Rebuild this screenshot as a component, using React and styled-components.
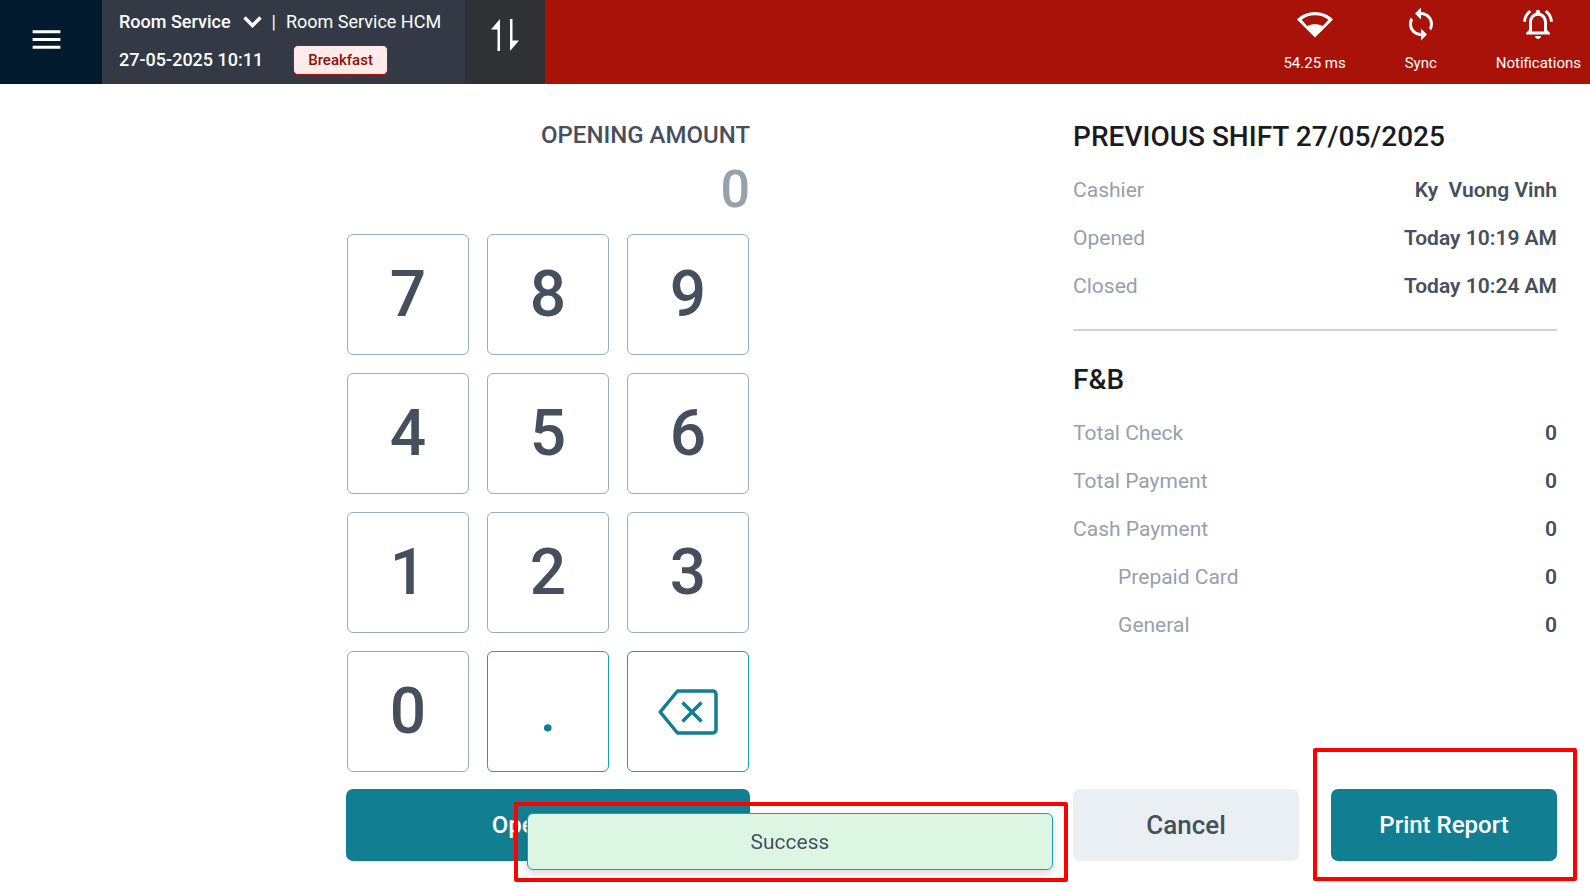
import React, { useState } from "react";
import styled, { createGlobalStyle, css } from "styled-components";
import { MdMenu, MdSync, MdOutlineNotificationsActive } from "react-icons/md";

const colors = {
  red: "#a81208",
  navy: "#021a2e",
  slate: "#333a46",
  charcoal: "#303135",
  teal: "#117e92",
  tealBorder: "#17a0b4",
  keyBorder: "#93adc3",
  text: "#454f5d",
  muted: "#95a1ac",
  heading: "#1b1b1f",
};

const GlobalStyle = createGlobalStyle`
  *, *::before, *::after {
    box-sizing: border-box;
  }

  body {
    margin: 0;
    background: #fff;
    color: ${colors.text};
    font-family: Roboto, "Liberation Sans", sans-serif;
  }

  button {
    padding: 0;
    border: 0;
    background: none;
    color: inherit;
    font: inherit;
    cursor: pointer;
  }

  h2, dl, dd, p {
    margin: 0;
  }
`;

const Page = styled.div`
  display: flex;
  flex-direction: column;
  min-height: 100vh;
`;

const Header = styled.header`
  display: flex;
  height: 84px;
  background: ${colors.red};
  color: #fff;
`;

const MenuButton = styled.button`
  display: flex;
  align-items: center;
  justify-content: center;
  width: 102px;
  padding-right: 10px;
  padding-bottom: 6px;
  background: ${colors.navy};
`;

const Outlet = styled.div`
  display: flex;
  flex-direction: column;
  gap: 8px;
  min-width: 363px;
  padding: 7px 17px;
  background: ${colors.slate};
  font-size: 18px;
  line-height: 28px;
`;

const OutletRow = styled.div`
  display: flex;
  align-items: center;
  gap: ${({ $gap }) => $gap};
  height: 30px;
`;

const OutletButton = styled.button`
  display: flex;
  align-items: center;
  gap: 12px;
  font-weight: 500;
`;

const DateTime = styled.span`
  font-weight: 500;
`;

const MealBadge = styled.span`
  padding: 0 14px;
  border: 1px solid #a81208;
  border-radius: 5px;
  background: #ffebe9;
  color: #8c1009;
  font-size: 15px;
  font-weight: 500;
`;

const SwapButton = styled.button`
  display: flex;
  justify-content: center;
  width: 80px;
  padding-top: 18px;
  background: ${colors.charcoal};
`;

const HeaderActions = styled.div`
  display: flex;
  gap: 57px;
  margin-left: auto;
  padding: 6px 9px 0 0;
`;

const HeaderAction = styled.button`
  display: flex;
  flex-direction: column;
  align-items: center;
  gap: 11px;
  font-size: 15px;
  line-height: 20px;
`;

const Main = styled.main`
  flex: 1;
  display: grid;
  grid-template-columns: 2.17fr 1fr;
  padding: 36px 33px 29px 23px;
`;

const AmountSection = styled.section`
  display: flex;
  flex-direction: column;
  width: 404px;
  justify-self: center;
`;

const AmountLabel = styled.label`
  font-size: 24px;
  font-weight: 500;
  line-height: 30px;
  text-align: right;
`;

const AmountInput = styled.input`
  width: 100%;
  height: 62px;
  margin: 8px 0 14px;
  padding: 0;
  border: 0;
  outline: 0;
  background: none;
  color: ${colors.muted};
  font: 500 52px Roboto, "Liberation Sans", sans-serif;
  text-align: right;
`;

const Keypad = styled.div`
  display: grid;
  grid-template-columns: repeat(3, 1fr);
  gap: 18px;
  padding: 0 1px;
`;

const Key = styled.button`
  display: flex;
  align-items: center;
  justify-content: center;
  height: 121px;
  border: 1px solid ${colors.keyBorder};
  border-radius: 6px;
  font-size: 64px;
  font-weight: 500;

  ${({ $accent }) =>
    $accent &&
    css`
      border-color: ${colors.tealBorder};
      color: ${colors.teal};
      font-size: 56px;
    `}
`;

const ActionButton = styled.button`
  flex: 1;
  min-height: 72px;
  border-radius: 7px;
  background: ${({ $light }) => ($light ? "#eaeff3" : colors.teal)};
  color: ${({ $light }) => ($light ? colors.text : "#fff")};
  font-size: ${({ $light }) => ($light ? "26px" : "24px")};
  font-weight: 500;
`;

const ButtonRow = styled.div`
  display: flex;
  gap: 32px;
  margin-top: auto;
`;

const ShiftPanel = styled.section`
  display: flex;
  flex-direction: column;
`;

const PanelTitle = styled.h2`
  color: ${colors.heading};
  font-size: 28px;
  font-weight: 500;
  line-height: 34px;
`;

const Details = styled.dl`
  padding-top: 12px;
`;

const DetailRow = styled.div`
  display: flex;
  align-items: center;
  justify-content: space-between;
  height: 48px;
  padding-left: ${({ $nested }) => ($nested ? "45px" : "0")};
  font-size: 21px;

  dt {
    color: ${colors.muted};
  }

  dd {
    font-weight: 600;
    white-space: pre;
  }
`;

const Divider = styled.hr`
  width: 100%;
  height: 2px;
  margin: 19px 0 32px;
  border: 0;
  background: #d4d3da;
`;

const Toast = styled.div`
  position: fixed;
  bottom: 20px;
  left: calc(50% - 5px);
  transform: translateX(-50%);
  display: flex;
  align-items: center;
  justify-content: center;
  width: 526px;
  height: 57px;
  border: 1px solid ${colors.tealBorder};
  border-radius: 6px;
  background: #dcf6e3;
  box-shadow: 0 4px 8px rgba(0, 0, 0, 0.15);
  font-size: 21px;

  &::after {
    content: "";
    position: absolute;
    inset: -12px -16px -13px -14px;
    border: 4px solid #f00;
    border-radius: 2px;
  }
`;

const Highlight = styled.div`
  position: relative;
  flex: 1;
  display: flex;

  &::after {
    content: "";
    position: absolute;
    inset: -41px -20px -20px -18px;
    border: 4px solid #f00;
    border-radius: 2px;
    pointer-events: none;
  }
`;

const ChevronIcon = () => (
  <svg width="19" height="12" viewBox="0 0 19 12" aria-hidden="true">
    <path d="M1.500 1.500 9.500 9.500l8-8" fill="none" stroke="currentColor" strokeWidth="3.400" />
  </svg>
);

const SwapIcon = () => (
  <svg width="28" height="34" viewBox="0 0 28 34" fill="currentColor" aria-hidden="true">
    <path d="M9 1v32H6.500V11.500H0z" />
    <path d="M19 33V1h2.500v21.500H28z" />
  </svg>
);

const SignalIcon = () => (
  <svg width="36" height="36" viewBox="0 0 24 24" fill="currentColor" aria-hidden="true">
    <path
      fillRule="evenodd"
      d="M12 4C7.310 4 3.070 5.900 0 8.980L12 21 24 8.980C20.930 5.900 16.690 4 12 4zM3.100 9.100C5.700 7.100 8.700 6.200 12 6.200s6.300.9 8.900 2.900l-3.700 4.300C15.700 12.600 14 12.200 12 12.200s-3.700.4-5.200 1.200z"
    />
  </svg>
);

const BackspaceIcon = () => (
  <svg width="60" height="46" viewBox="0 0 60 46" fill="none" stroke="currentColor" strokeWidth="3.500" aria-hidden="true">
    <path d="M19.500 2H55a3 3 0 0 1 3 3v36a3 3 0 0 1-3 3H19.500L2.200 23z" strokeLinejoin="round" />
    <path d="m24.500 13.500 19 19m0-19-19 19" />
  </svg>
);

const DIGITS = ["7", "8", "9", "4", "5", "6", "1", "2", "3", "0"];

const SHIFT_ROWS = [
  { label: "Cashier", value: "Ky  Vuong Vinh" },
  { label: "Opened", value: "Today 10:19 AM" },
  { label: "Closed", value: "Today 10:24 AM" },
];

const FNB_ROWS = [
  { label: "Total Check", value: "0" },
  { label: "Total Payment", value: "0" },
  { label: "Cash Payment", value: "0" },
  { label: "Prepaid Card", value: "0", nested: true },
  { label: "General", value: "0", nested: true },
];

const DetailList = ({ rows }) => (
  <Details>
    {rows.map(({ label, value, nested }) => (
      <DetailRow key={label} $nested={nested}>
        <dt>{label}</dt>
        <dd>{value}</dd>
      </DetailRow>
    ))}
  </Details>
);

const App = () => {
  const [amount, setAmount] = useState("0");

  const handleKeyClick = (key) => {
    setAmount((prev) => {
      if (key === "." && prev.includes(".")) return prev;
      return prev === "0" && key !== "." ? key : prev + key;
    });
  };

  const handleBackspaceClick = () => {
    setAmount((prev) => prev.slice(0, -1) || "0");
  };

  return (
    <Page>
      <GlobalStyle />
      <Header>
        <MenuButton type="button" aria-label="Menu">
          <MdMenu size={37} />
        </MenuButton>
        <Outlet>
          <OutletRow $gap="10px">
            <OutletButton type="button">
              Room Service
              <ChevronIcon />
            </OutletButton>
            <span>|</span>
            <span>Room Service HCM</span>
          </OutletRow>
          <OutletRow $gap="30px">
            <DateTime>27-05-2025 10:11</DateTime>
            <MealBadge>Breakfast</MealBadge>
          </OutletRow>
        </Outlet>
        <SwapButton type="button" aria-label="Switch">
          <SwapIcon />
        </SwapButton>
        <HeaderActions>
          <HeaderAction type="button">
            <SignalIcon />
            54.25 ms
          </HeaderAction>
          <HeaderAction type="button">
            <MdSync size={36} />
            Sync
          </HeaderAction>
          <HeaderAction type="button">
            <MdOutlineNotificationsActive size={36} />
            Notifications
          </HeaderAction>
        </HeaderActions>
      </Header>

      <Main>
        <AmountSection>
          <AmountLabel htmlFor="opening-amount">OPENING AMOUNT</AmountLabel>
          <AmountInput
            id="opening-amount"
            type="text"
            inputMode="decimal"
            value={amount}
            onChange={(e) => setAmount(e.target.value)}
          />
          <Keypad>
            {DIGITS.map((digit) => (
              <Key key={digit} type="button" onClick={() => handleKeyClick(digit)}>
                {digit}
              </Key>
            ))}
            <Key type="button" $accent onClick={() => handleKeyClick(".")}>
              .
            </Key>
            <Key type="button" $accent aria-label="Backspace" onClick={handleBackspaceClick}>
              <BackspaceIcon />
            </Key>
          </Keypad>
          <ButtonRow>
            <ActionButton type="button">Open Shift</ActionButton>
          </ButtonRow>
        </AmountSection>

        <ShiftPanel>
          <PanelTitle>PREVIOUS SHIFT 27/05/2025</PanelTitle>
          <DetailList rows={SHIFT_ROWS} />
          <Divider />
          <PanelTitle>F&amp;B</PanelTitle>
          <DetailList rows={FNB_ROWS} />
          <ButtonRow>
            <ActionButton type="button" $light>
              Cancel
            </ActionButton>
            <Highlight>
              <ActionButton type="button">Print Report</ActionButton>
            </Highlight>
          </ButtonRow>
        </ShiftPanel>
      </Main>

      <Toast role="status">Success</Toast>
    </Page>
  );
};

export default App;
